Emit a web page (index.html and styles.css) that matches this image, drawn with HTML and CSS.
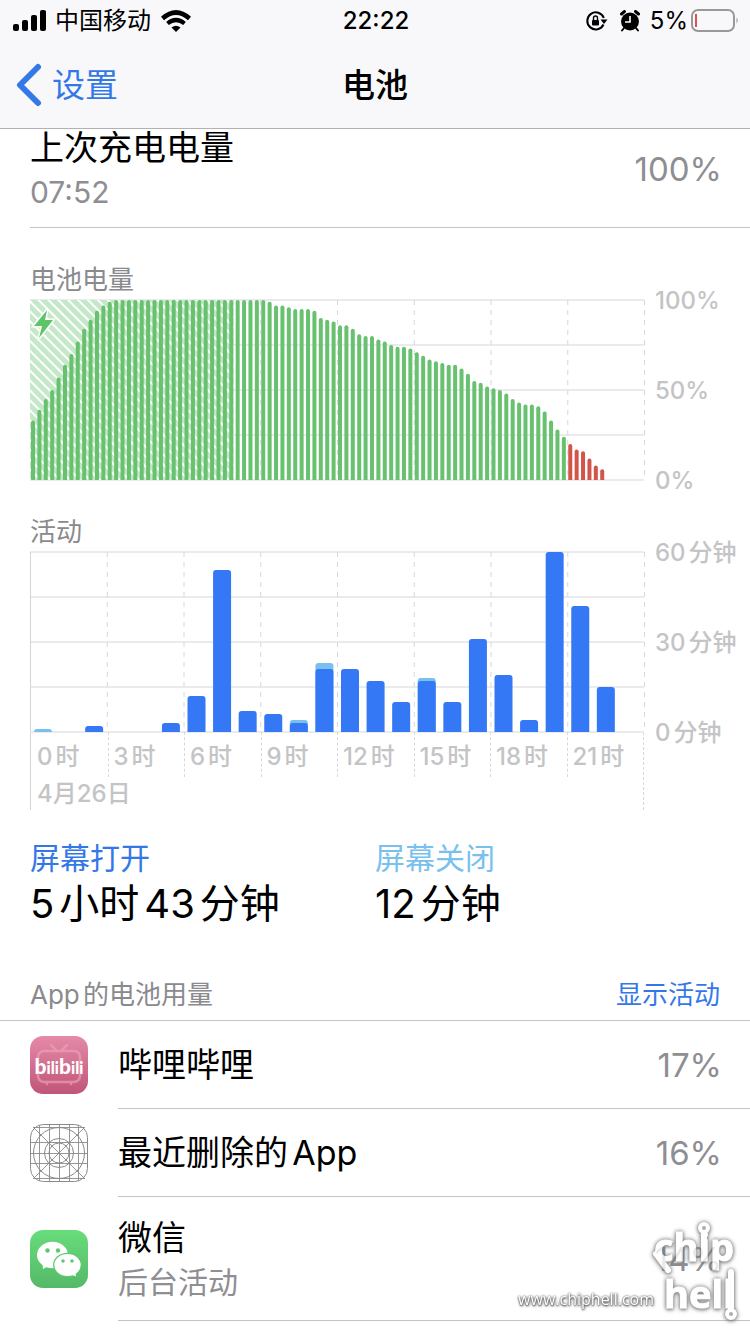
FILE: index.html
```html
<!DOCTYPE html>
<html lang="zh-CN">
<head>
    <meta charset="UTF-8">
    <meta name="viewport" content="width=device-width, initial-scale=1.0">
    <title>电池</title>
    <link rel="stylesheet" href="styles.css">
</head>
<body>
    <header class="header">
        <div class="status-bar">
            <div class="status-left">
                <svg width="34" height="22" viewBox="0 0 34 22">
                    <rect x="0" y="14" width="6" height="7" rx="2"/>
                    <rect x="9" y="10" width="6" height="11" rx="2"/>
                    <rect x="18" y="5" width="6" height="16" rx="2"/>
                    <rect x="27" y="0" width="6" height="21" rx="2"/>
                </svg>
                <span>中国移动</span>
                <svg class="wifi" width="30" height="22" viewBox="0 0 30 22">
                    <path d="M1.5 8.500Q15 -3.500 28.500 8.500" fill="none" stroke="#000" stroke-width="4.600"/>
                    <path d="M6.500 13.500Q15 6.500 23.500 13.500" fill="none" stroke="#000" stroke-width="4.200"/>
                    <path d="M10.500 17.500Q15 14 19.500 17.500L15 22Z"/>
                </svg>
            </div>
            <time class="clock">22:22</time>
            <div class="status-right">
                <svg width="22" height="22" viewBox="0 0 22 22">
                    <path d="M17.500 14.500A8.500 8.500 0 1 1 17.800 8" fill="none" stroke="#000" stroke-width="2"/>
                    <path d="M14.500 9.500H21.500L18 14Z"/>
                    <rect x="6" y="10" width="7" height="5.500" rx="1"/>
                    <path d="M7.500 10V8a2 2 0 0 1 4 0v2" fill="none" stroke="#000" stroke-width="1.400"/>
                </svg>
                <svg class="alarm" width="20" height="22" viewBox="0 0 20 22">
                    <circle cx="10" cy="11.500" r="9"/>
                    <path d="M1.500 4L4.500 1.500M18.500 4L15.500 1.500" stroke="#000" stroke-width="3" stroke-linecap="round"/>
                    <path d="M4 18L2 20.500M16 18L18 20.500" stroke="#000" stroke-width="2" stroke-linecap="round"/>
                    <path d="M10 6V12H5" fill="none" stroke="#fff" stroke-width="1.600"/>
                </svg>
                <span>5%</span>
                <svg class="battery" width="48" height="24" viewBox="0 0 48 24">
                    <rect x="1" y="1" width="42" height="21" rx="6" fill="none" stroke="#999" stroke-width="2"/>
                    <rect x="4" y="5" width="2" height="13" fill="#d9534f"/>
                    <path d="M45.500 8.500Q48 11.500 45.500 14.500Z" fill="#999"/>
                </svg>
            </div>
        </div>
        <nav class="nav">
            <a class="back" href="#">
                <svg width="26" height="44" viewBox="0 0 26 44">
                    <path d="M22 4L4 22L22 40" fill="none" stroke="#3478e8" stroke-width="6" stroke-linecap="round" stroke-linejoin="round"/>
                </svg>
                设置
            </a>
            <h1>电池</h1>
        </nav>
    </header>

    <main>
        <section class="last-charge">
            <div>
                <h2>上次充电电量</h2>
                <p>07:52</p>
            </div>
            <span class="value">100%</span>
        </section>

        <section class="chart">
            <h3>电池电量</h3>
            <div class="chart-body">
                <svg class="plot" id="batteryPlot" viewBox="0 0 614 180">
                    <defs>
                        <pattern id="hatch" width="7" height="7" patternUnits="userSpaceOnUse" patternTransform="rotate(45)">
                            <rect width="7" height="7" fill="#c5e8c8"/>
                            <rect width="7" height="2" fill="#fff"/>
                        </pattern>
                    </defs>
                </svg>
                <div class="axis">
                    <span>100%</span>
                    <span>50%</span>
                    <span>0%</span>
                </div>
            </div>
        </section>

        <section class="chart">
            <h3>活动</h3>
            <div class="chart-body">
                <svg class="plot" id="activityPlot" viewBox="0 0 614 180"></svg>
                <div class="axis">
                    <span>60分钟</span>
                    <span>30分钟</span>
                    <span>0分钟</span>
                </div>
            </div>
            <div class="time-axis">
                <div class="hours">
                    <span>0时</span>
                    <span>3时</span>
                    <span>6时</span>
                    <span>9时</span>
                    <span>12时</span>
                    <span>15时</span>
                    <span>18时</span>
                    <span>21时</span>
                </div>
                <div class="date">4月26日</div>
            </div>
        </section>

        <section class="totals">
            <div>
                <h3 class="screen-on">屏幕打开</h3>
                <p>5小时43分钟</p>
            </div>
            <div>
                <h3 class="screen-off">屏幕关闭</h3>
                <p>12分钟</p>
            </div>
        </section>

        <section>
            <div class="list-header">
                <h3>App的电池用量</h3>
                <button type="button">显示活动</button>
            </div>
            <ul class="app-list">
                <li>
                    <svg class="app-icon" viewBox="0 0 58 58">
                        <defs>
                            <linearGradient id="pink" x1="0" y1="0" x2="0" y2="1">
                                <stop offset="0" stop-color="#e58aa8"/>
                                <stop offset="1" stop-color="#c05578"/>
                            </linearGradient>
                        </defs>
                        <rect width="58" height="58" rx="13" fill="url(#pink)"/>
                        <g fill="none" stroke="#f0a6bd" stroke-width="2.500" stroke-linecap="round" opacity=".6">
                            <rect x="8" y="15" width="42" height="31" rx="6"/>
                            <path d="M21 9L27 15M37 9L31 15M17 46V48M41 46V48"/>
                        </g>
                        <text class="bili" x="29" y="38" text-anchor="middle"><tspan class="bili-big">b</tspan>ili<tspan class="bili-big">b</tspan>ili</text>
                    </svg>
                    <div class="app-row">
                        <h4>哔哩哔哩</h4>
                        <span class="value">17%</span>
                    </div>
                </li>
                <li>
                    <svg class="app-icon" viewBox="0 0 58 58" fill="none" stroke="#8a8a8a">
                        <rect x="0.500" y="0.500" width="57" height="57" rx="13"/>
                        <path d="M3.500 3.500L54.500 54.500M54.500 3.500L3.500 54.500M9.500 1V57M19.500 0V58M29.500 0V58M39.500 0V58M48.500 1V57M0 18.500H58M0 29.500H58M0 39.500H58M3 3.500H55M3 54.500H55" stroke-width=".9"/>
                        <circle cx="29" cy="29" r="25.500"/>
                        <circle cx="29" cy="29" r="14.500"/>
                        <circle cx="29" cy="29" r="10"/>
                    </svg>
                    <div class="app-row">
                        <h4>最近删除的App</h4>
                        <span class="value">16%</span>
                    </div>
                </li>
                <li class="tall">
                    <svg class="app-icon" viewBox="0 0 58 58">
                        <defs>
                            <linearGradient id="green" x1="0" y1="0" x2="0" y2="1">
                                <stop offset="0" stop-color="#68dc7b"/>
                                <stop offset="1" stop-color="#55b968"/>
                            </linearGradient>
                        </defs>
                        <rect width="58" height="58" rx="13" fill="url(#green)"/>
                        <path d="M12.500 34L13 39L18.500 36Z" fill="#fff"/>
                        <ellipse cx="22.500" cy="25" rx="15.500" ry="13.200" fill="#fff"/>
                        <ellipse cx="37.500" cy="35" rx="14.500" ry="12.300" fill="#60c873"/>
                        <ellipse cx="37.500" cy="35" rx="13.200" ry="11" fill="#fff"/>
                        <path d="M40 44L46 46.500L45 41Z" fill="#fff"/>
                        <g fill="#60c873">
                            <circle cx="17.500" cy="20.500" r="2.200"/>
                            <circle cx="28" cy="20.500" r="2.200"/>
                            <circle cx="33" cy="31" r="1.800"/>
                            <circle cx="42" cy="31" r="1.800"/>
                        </g>
                    </svg>
                    <div class="app-row">
                        <div>
                            <h4>微信</h4>
                            <p>后台活动</p>
                        </div>
                        <span class="value">14%</span>
                    </div>
                </li>
            </ul>
        </section>
    </main>

    <div class="watermark">
        <span>www.chiphell.com</span>
        <svg width="92" height="108" viewBox="0 0 92 108">
            <g fill="none" stroke="#fff" stroke-width="6" stroke-linecap="round">
                <path d="M6 36L18 52M54 14V40M81 54V92"/>
            </g>
            <g class="logo-text">
                <text x="4" y="43">chip</text>
                <text x="14" y="90">hell</text>
            </g>
            <g fill="#999" stroke="#fff" stroke-width="4">
                <circle cx="54" cy="10" r="4"/>
                <circle cx="81" cy="96" r="4"/>
            </g>
        </svg>
    </div>

    <script>
        const NS = 'http://www.w3.org/2000/svg';

        // battery level every 15 minutes, in percent
        const levels = [
            33, 39, 45, 50, 57, 64, 70, 77, 84, 89, 94, 97, 99, 100, 100, 100,
            100, 100, 100, 100, 100, 100, 100, 100, 100, 100, 100, 100, 100, 100, 100, 100,
            100, 100, 100, 100, 100, 99, 97, 97, 96, 95, 95, 95, 94, 90, 89, 88,
            86, 86, 84, 81, 80, 80, 78, 77, 75, 74, 74, 73, 71, 69, 67, 66,
            65, 64, 64, 62, 59, 55, 54, 52, 51, 50, 48, 45, 43, 42, 42, 41,
            38, 33, 28, 24, 20, 17, 16, 12, 8, 6
        ];
        const chargedSlots = 32;

        // minutes per hour: [screen on, screen off]
        const activity = [
            [0, 1], [0, 0], [2, 0], [0, 0], [0, 0], [3, 0], [12, 0], [54, 0],
            [7, 0], [6, 0], [3, 1], [21, 2], [21, 0], [17, 0], [10, 0], [17, 1],
            [10, 0], [31, 0], [19, 0], [4, 0], [60, 0], [42, 0], [15, 0], [0, 0]
        ];

        function add(svg, tag, attrs) {
            const el = document.createElementNS(NS, tag);
            for (const key in attrs) {
                el.setAttribute(key, attrs[key]);
            }
            svg.appendChild(el);
        }

        function drawGrid(svg) {
            for (let y = 0; y <= 180; y += 45) {
                add(svg, 'path', { d: `M0 ${y}H614`, class: 'grid-row' });
            }
            for (let i = 0; i <= 8; i++) {
                const x = i * 614 / 8 + 0.5;
                add(svg, 'path', { d: `M${x} 0V180`, class: i === 0 ? 'grid-edge' : 'grid-col' });
            }
        }

        // bar with rounded top corners
        function bar(svg, x, h, w, r, name) {
            r = Math.min(r, h);
            const y = 180 - h;
            add(svg, 'path', {
                d: `M${x} 180V${y + r}Q${x} ${y} ${x + r} ${y}H${x + w - r}Q${x + w} ${y} ${x + w} ${y + r}V180Z`,
                class: name
            });
        }

        function drawBattery() {
            const svg = document.getElementById('batteryPlot');
            const step = 614 / 96;
            drawGrid(svg);
            add(svg, 'rect', { x: 0, y: 0, width: chargedSlots * step - 1, height: 180, fill: 'url(#hatch)' });
            levels.forEach((level, i) => {
                bar(svg, 1 + i * step, level * 1.8, 4, 2, i < 84 ? 'level' : 'level-low');
            });
            add(svg, 'path', { d: 'M17 10L4 26H12L9 38L23 20H15Z', class: 'bolt' });
        }

        function drawActivity() {
            const svg = document.getElementById('activityPlot');
            const step = 614 / 24;
            drawGrid(svg);
            activity.forEach(([on, off], i) => {
                const x = 4 + i * step;
                if (off) bar(svg, x, (on + off) * 3, 18, 3, 'bar-off');
                if (on) bar(svg, x, on * 3, 18, 3, 'bar-on');
            });
        }

        drawBattery();
        drawActivity();
    </script>
</body>
</html>
```

FILE: styles.css
```css
* {
    box-sizing: border-box;
}

body {
    margin: 0;
    background-color: #fff;
    color: #000;
    font-family: Inter, "Noto Sans CJK SC", sans-serif;
    text-autospace: normal;
}

h1, h2, h3, h4, p, ul {
    margin: 0;
    padding: 0;
    font-weight: 400;
}

/* header */
.header {
    background-color: #f8f8fa;
    border-bottom: 1px solid #b2b2b4;
}

.status-bar {
    display: grid;
    grid-template-columns: 1fr auto 1fr;
    align-items: center;
    height: 42px;
    padding: 0 11px 0 13px;
    font-size: 24px;
    line-height: 36px;
}

.status-left,
.status-right {
    display: flex;
    align-items: center;
    gap: 8px;
}

.status-left .wifi {
    margin-left: 2px;
}

.status-right {
    justify-content: flex-end;
    gap: 6px;
}

.status-right .alarm {
    margin: 0 4px 0 6px;
}

.status-right .battery {
    margin-left: -3px;
}

.clock {
    font-weight: 500;
}

.nav {
    display: grid;
    grid-template-columns: 1fr auto 1fr;
    align-items: center;
    height: 86px;
    padding: 0 16px;
}

.nav h1 {
    font-size: 33px;
    font-weight: 500;
    line-height: 44px;
}

.back {
    display: flex;
    align-items: center;
    gap: 10px;
    color: #3478e8;
    font-size: 33px;
    line-height: 44px;
    text-decoration: none;
}

/* last charge */
.last-charge {
    display: flex;
    justify-content: space-between;
    align-items: center;
    margin-left: 30px;
    padding: 0 28px 10px 0;
    border-bottom: 1px solid #c4c4c6;
}

.last-charge h2 {
    font-size: 34px;
    line-height: 38px;
}

.last-charge p {
    color: #8e8e93;
    font-size: 30px;
    line-height: 50px;
}

.last-charge .value {
    margin-top: -8px;
}

.value {
    color: #8e8e93;
    font-size: 33px;
    line-height: 40px;
}

/* charts */
.chart {
    padding: 34px 0 0 30px;
}

.chart h3 {
    margin-bottom: 2px;
    color: #8a8a8e;
    font-size: 26px;
    line-height: 36px;
}

.chart-body {
    display: grid;
    grid-template-columns: 1fr 106px;
}

.plot {
    display: block;
    width: 100%;
    overflow: visible;
}

.axis {
    display: flex;
    flex-direction: column;
    justify-content: space-between;
    margin: -14px 0 -16px;
    padding-left: 11px;
    color: #c4c4c6;
    font-size: 24px;
    font-weight: 500;
    line-height: 30px;
    white-space: nowrap;
}

.grid-row {
    fill: none;
    stroke: #ebebed;
    stroke-width: 2;
}

.grid-edge {
    stroke: #d4d4d6;
}

.grid-col {
    stroke: #d8d8da;
    stroke-dasharray: 5 5;
}

.level {
    fill: #67c16f;
}

.level-low {
    fill: #d35448;
}

.bolt {
    fill: #5fc468;
    stroke: #fff;
    stroke-width: 3;
    paint-order: stroke;
}

.bar-on {
    fill: #3478f6;
}

.bar-off {
    fill: #78c1ef;
}

.time-axis {
    margin-right: 106px;
    border-left: 1px solid #d4d4d6;
    border-right: 1px dashed #d8d8da;
    color: #c4c4c6;
    font-size: 24px;
    font-weight: 500;
}

.hours {
    display: grid;
    grid-template-columns: repeat(8, 1fr);
}

.hours span {
    padding: 4px 0 0 5px;
    border-left: 1px dashed #d8d8da;
    line-height: 41px;
}

.hours span:first-child {
    border-left-color: transparent;
}

.date {
    padding-left: 6px;
    line-height: 33px;
    text-autospace: no-autospace;
}

/* screen on / off */
.totals {
    display: grid;
    grid-template-columns: 1fr 1fr;
    padding: 28px 30px 0;
}

.totals h3 {
    font-size: 30px;
    line-height: 40px;
}

.totals p {
    font-size: 40px;
    line-height: 52px;
}

.screen-on {
    color: #3478e8;
}

.screen-off {
    color: #78c1ef;
}

/* app list */
.list-header {
    display: flex;
    justify-content: space-between;
    align-items: center;
    padding: 47px 30px 7px;
    border-bottom: 1px solid #c4c4c6;
    line-height: 36px;
}

.list-header h3 {
    color: #8a8a8e;
    font-size: 26px;
}

.list-header button {
    padding: 0;
    border: none;
    background: none;
    color: #3478e8;
    font-family: inherit;
    font-size: 26px;
    line-height: 36px;
    cursor: pointer;
}

.app-list {
    list-style: none;
}

.app-list li {
    display: flex;
    align-items: center;
    gap: 30px;
    padding-left: 30px;
}

.app-icon {
    flex: none;
    width: 58px;
    height: 58px;
}

.app-row {
    display: flex;
    flex: 1;
    justify-content: space-between;
    align-items: center;
    min-height: 88px;
    padding-right: 28px;
    border-bottom: 1px solid #c4c4c6;
}

.tall .app-row {
    min-height: 124px;
}

.app-row h4 {
    font-size: 34px;
    line-height: 46px;
}

.app-row p {
    color: #8e8e93;
    font-size: 30px;
    line-height: 42px;
}

.bili {
    fill: #fff;
    font-family: Lato, sans-serif;
    font-size: 16px;
    font-weight: 900;
}

.bili-big {
    font-size: 21px;
}

/* watermark */
.watermark {
    position: fixed;
    right: 8px;
    bottom: 8px;
    display: flex;
    align-items: flex-end;
    color: #fff;
    font-family: "Open Sans", sans-serif;
    font-size: 16px;
    pointer-events: none;
}

.watermark span {
    margin-right: -4px;
    padding-bottom: 16px;
    text-shadow: 0 0 2px #555, 0 1px 2px #555, 1px 1px 3px #777;
}

.watermark svg {
    filter: drop-shadow(0 0 2px #666) drop-shadow(0 1px 1px #888);
    opacity: .8;
}

.logo-text {
    fill: #fff;
    stroke: #fff;
    stroke-width: 1;
    font-size: 38px;
    font-weight: 700;
}
```
